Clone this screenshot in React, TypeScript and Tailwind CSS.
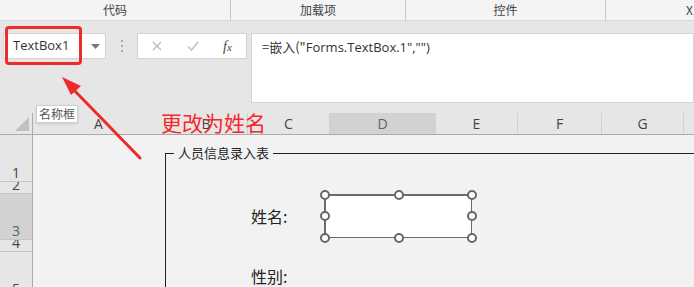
import React from 'react';

const cols = [
  { name: 'A', w: 132 },
  { name: 'B', w: 83 },
  { name: 'C', w: 82 },
  { name: 'D', w: 106, active: true },
  { name: 'E', w: 82 },
  { name: 'F', w: 84 },
  { name: 'G', w: 82 },
  { name: 'H', w: 82 },
];

const rows = [
  { n: '1', h: 47 },
  { n: '2', h: 12 },
  { n: '3', h: 46, active: true },
  { n: '4', h: 12 },
  { n: '5', h: 46 },
];

function Handle() {
  return <div className="h-[10px] w-[10px] rounded-full border-2 border-[#666] bg-white" />;
}

export default function App() {
  return (
    <div className="relative h-[287px] w-[694px] overflow-hidden bg-[#f2f2f2] font-['Noto_Sans_CJK_SC',sans-serif] text-[#333]">
      {/* ribbon tabs */}
      <div className="flex h-[21px] border-b border-[#d6d6d6] bg-[#f4f4f4] text-[12px] text-[#444]">
        <div className="flex w-[231px] items-center justify-center border-r border-[#c8c8c8]">代码</div>
        <div className="flex w-[175px] items-center justify-center border-r border-[#c8c8c8]">加载项</div>
        <div className="flex w-[200px] items-center justify-center border-r border-[#c8c8c8]">控件</div>
        <div className="flex flex-1 items-center justify-end pr-[1px]">X</div>
      </div>

      {/* formula bar */}
      <div className="flex h-[92px] items-start bg-[#e6e6e6] pt-[12px] pl-[3px]">
        <div className="flex h-[26px] w-[103px] items-center justify-between border border-[#d4d4d4] bg-white pl-[9px] pr-[5px] font-['Open_Sans',sans-serif] text-[13px] text-[#333]">
          <span>TextBox1</span>
          <svg width="9" height="5" viewBox="0 0 9 5"><path d="M0 0h9L4.5 5z" fill="#777" /></svg>
        </div>
        <div className="flex w-[31px] flex-col items-center gap-[3px] pt-[7px]">
          <div className="h-[2px] w-[2px] bg-[#aaa]" />
          <div className="h-[2px] w-[2px] bg-[#aaa]" />
          <div className="h-[2px] w-[2px] bg-[#aaa]" />
        </div>
        <div className="flex h-[26px] w-[110px] items-center border border-[#d4d4d4] bg-white">
          <svg className="ml-[14px]" width="10" height="10" viewBox="0 0 10 10"><path d="M1 1l8 8M9 1l-8 8" stroke="#bdbdbd" strokeWidth="1.4" /></svg>
          <svg className="ml-[25px]" width="12" height="10" viewBox="0 0 12 10"><path d="M1 5.5l3.5 3.5L11 1" stroke="#bdbdbd" strokeWidth="1.4" fill="none" /></svg>
          <span className="ml-[24px] font-['Liberation_Serif',serif] text-[14px] italic text-[#444]">f<span className="text-[11px]">x</span></span>
        </div>
        <div className="ml-[4px] h-[70px] flex-1 border border-[#d4d4d4] bg-white pl-[10px] pt-[3px] text-[13px] text-[#333]">
          =嵌入(&quot;<span className="font-['Open_Sans',sans-serif]">Forms.TextBox.1&quot;,&quot;&quot;)</span>
        </div>
      </div>

      {/* column headers */}
      <div className="flex h-[22px] border-b border-[#ababab] bg-[#e6e6e6] font-['Open_Sans',sans-serif] text-[14px] text-[#444]">
        <div className="relative w-[33px] shrink-0 border-r border-[#ababab]">
          <svg className="absolute bottom-[3px] right-[3px]" width="14" height="14" viewBox="0 0 14 14"><path d="M14 0v14H0z" fill="#c0c0c0" /></svg>
        </div>
        {cols.map((c) => (
          <div
            key={c.name}
            style={{ width: c.w }}
            className={`flex shrink-0 items-end justify-center border-r border-[#d0d0d0] leading-[20px] ${c.active ? 'bg-[#d2d2d2] text-[#4f6b5c]' : ''}`}
          >
            {c.name}
          </div>
        ))}
      </div>

      {/* sheet body */}
      <div className="relative flex">
        <div className="w-[33px] shrink-0 border-r border-[#ababab] bg-[#e6e6e6] font-['Open_Sans',sans-serif] text-[14px] text-[#444]">
          {rows.map((r) => (
            <div
              key={r.n}
              style={{ height: r.h }}
              className={`flex items-end justify-center overflow-hidden border-b border-[#c6c6c6] leading-[16px] ${r.active ? 'bg-[#d2d2d2] text-[#4f6b5c]' : ''}`}
            >
              {r.n}
            </div>
          ))}
        </div>
        <div className="flex-1" />

        {/* group box */}
        <div className="absolute left-[165px] top-[18px] h-[200px] w-[600px] border border-[#222]">
          <div className="absolute -top-[10px] left-[8px] bg-[#f2f2f2] px-[4px] text-[13px] leading-[18px] text-[#222]">人员信息录入表</div>
          <div className="absolute left-[85px] top-[50px] text-[16px] text-[#222]">姓名:</div>
          <div className="absolute left-[85px] top-[110px] text-[16px] text-[#222]">性别:</div>
        </div>

        {/* selected textbox */}
        <div className="absolute left-[324px] top-[59px] h-[44px] w-[148px] border-2 border-r border-b border-[#6b6b6b] bg-white">
          <div className="absolute -left-[6px] -top-[6px]"><Handle /></div>
          <div className="absolute left-[68px] -top-[6px]"><Handle /></div>
          <div className="absolute -right-[6px] -top-[6px]"><Handle /></div>
          <div className="absolute -left-[6px] top-[15px]"><Handle /></div>
          <div className="absolute -right-[6px] top-[15px]"><Handle /></div>
          <div className="absolute -bottom-[6px] -left-[6px]"><Handle /></div>
          <div className="absolute -bottom-[6px] left-[68px]"><Handle /></div>
          <div className="absolute -bottom-[6px] -right-[6px]"><Handle /></div>
        </div>
      </div>

      {/* annotations */}
      <div className="absolute left-[5px] top-[26px] h-[39px] w-[77px] rounded-[4px] border-[3px] border-[#ee2b2b]" />
      <div className="absolute left-[36px] top-[105px] border border-[#cfcfcf] bg-white px-[2px] text-[12px] leading-[16px] text-[#555] shadow-sm">名称框</div>
      <div className="absolute left-[161px] top-[108px] text-[21px] leading-[28px] text-[#f52a2a]">更改为姓名</div>
      <svg className="absolute left-0 top-0" width="694" height="287" viewBox="0 0 694 287">
        <path d="M140 158L72 88" stroke="#ee2b2b" strokeWidth="3" strokeLinecap="round" />
        <path d="M62 77L81 86L71 95z" fill="#ee2b2b" />
      </svg>
    </div>
  );
}
